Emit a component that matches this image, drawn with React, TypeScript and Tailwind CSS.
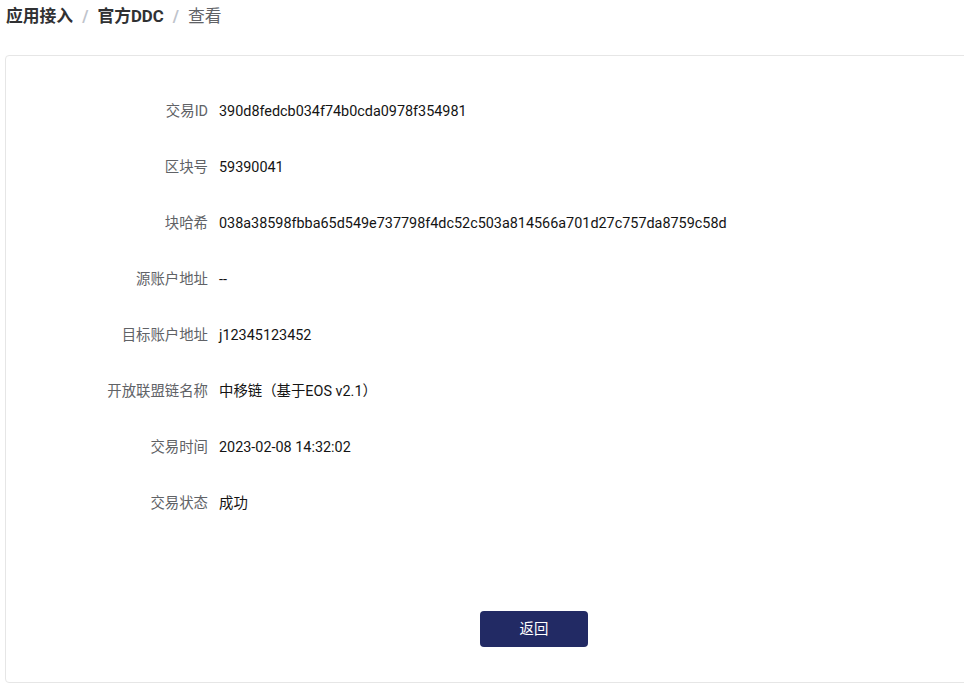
import React from "react";

const rows: { label: string; value: string }[] = [
  { label: "交易ID", value: "390d8fedcb034f74b0cda0978f354981" },
  { label: "区块号", value: "59390041" },
  { label: "块哈希", value: "038a38598fbba65d549e737798f4dc52c503a814566a701d27c757da8759c58d" },
  { label: "源账户地址", value: "--" },
  { label: "目标账户地址", value: "j12345123452" },
  { label: "开放联盟链名称", value: "中移链（基于EOS v2.1）" },
  { label: "交易时间", value: "2023-02-08 14:32:02" },
  { label: "交易状态", value: "成功" },
];

export default function App() {
  return (
    <div
      className="w-full h-[683px] overflow-hidden bg-white"
      style={{ fontFamily: 'Roboto, "Noto Sans CJK SC", sans-serif' }}
    >
      {/* breadcrumb */}
      <div className="h-[34px] px-[6px] flex items-center text-[16.8px] text-[#303133]">
        <span className="font-bold">应用接入</span>
        <span className="mx-[9px] text-[#c0c4cc] font-bold">/</span>
        <span className="font-bold">官方DDC</span>
        <span className="mx-[9px] text-[#c0c4cc] font-bold">/</span>
        <span className="text-[#606266]">查看</span>
      </div>

      {/* detail card */}
      <div className="mt-[21px] ml-[5px] w-[980px] h-[628px] border border-[#e6e6e6] rounded-[4px] pt-[28px]">
        {rows.map((r) => (
          <div key={r.label} className="h-[56px] flex items-center text-[14.4px]">
            <div className="w-[202px] text-right text-[#606266]">{r.label}</div>
            <div className="ml-[11px] text-[#141414]">{r.value}</div>
          </div>
        ))}

        <div className="mt-[79px] pl-[474px]">
          <button className="w-[108px] h-[36px] rounded-[4px] bg-[#222a64] text-white text-[14.4px] pt-[1px]">
            返回
          </button>
        </div>
      </div>
    </div>
  );
}
